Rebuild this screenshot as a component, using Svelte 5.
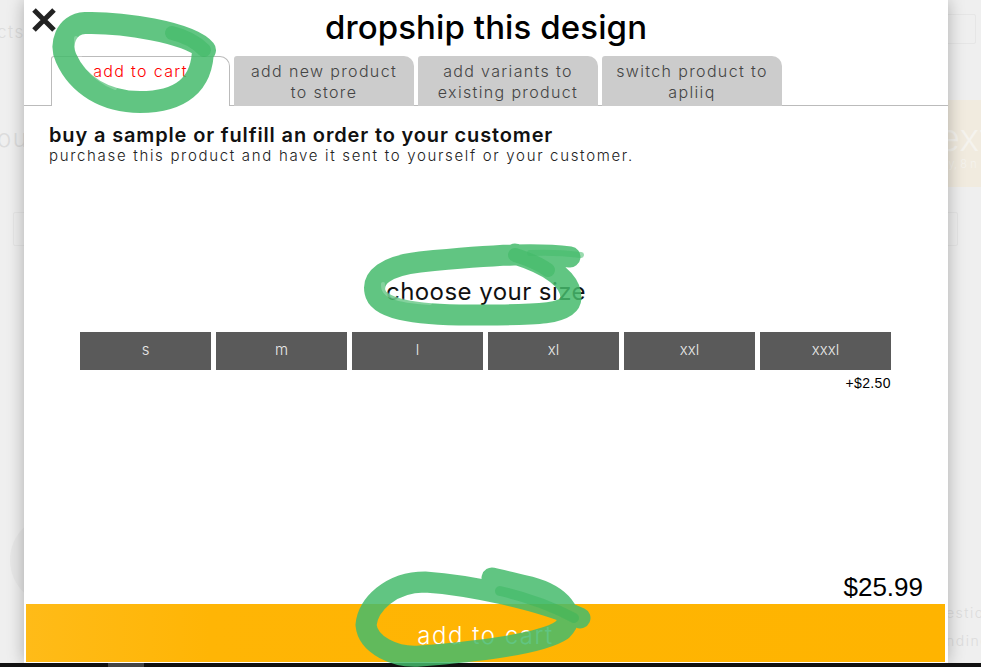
<script lang="ts">
  const tabs = [
    { label: "add to cart", active: true },
    { label: "add new product to store", active: false },
    { label: "add variants to existing product", active: false },
    { label: "switch product to apliiq", active: false },
  ];
  const sizes = ["s", "m", "l", "xl", "xxl", "xxxl"];
</script>

<div class="page">
  <!-- dimmed shop page behind the modal -->
  <div class="behind">
    <span class="ghost cts">cts</span>
    <span class="ghost you">ou</span>
    <span class="ghost-box search"></span>
    <span class="ghost-box left-box"></span>
    <span class="ghost-box right-box"></span>
    <div class="promo"><span class="ex">ext</span><span class="uy">uy, 8 n</span></div>
    <span class="ghost-circle"></span>
    <span class="ghost est">estio</span>
    <span class="ghost nd">nding</span>
  </div>

  <div class="modal">
    <button class="close" aria-label="close">
      <svg width="28" height="28" viewBox="0 0 28 28">
        <path d="M4 4 L24 24 M24 4 L4 24" stroke="#222" stroke-width="5" />
      </svg>
    </button>
    <h1>dropship this design</h1>

    <div class="tabs">
      {#each tabs as tab}
        <div class="tab" class:active={tab.active}>{tab.label}</div>
      {/each}
    </div>

    <div class="intro">
      <h2>buy a sample or fulfill an order to your customer</h2>
      <p>purchase this product and have it sent to yourself or your customer.</p>
    </div>

    <h3>choose your size</h3>
    <div class="sizes">
      {#each sizes as size}
        <div class="size">{size}</div>
      {/each}
    </div>
    <div class="upcharge">+$2.50</div>

    <div class="price">$25.99</div>
    <button class="cart">add to cart</button>
  </div>

  <div class="footer"><span class="thumb"></span></div>

  <!-- hand drawn highlighter marks -->
  <svg class="marks" width="981" height="667" viewBox="0 0 981 667">
    <g class="ink" fill="none" stroke-linejoin="round" stroke-linecap="round">
      <g stroke="#45bb6c" stroke-opacity="0.85">
        <path stroke-width="22" d="M205 50 C190 32 120 22 85 23 C65 24 60 45 66 58 C78 85 105 102 140 102 C180 102 203 85 203 48" />
        <path stroke-width="21" d="M570 257 C540 253 500 254 420 262 C385 266 372 278 375 292 C378 308 410 315 470 315 C530 315 570 316 571 298 C571 280 550 265 515 254" />
        <path stroke-width="21" d="M580 618 C540 600 470 585 425 582 C390 582 368 605 366 625 C368 645 395 658 420 656 C470 652 540 645 562 630 C578 615 560 595 530 587 C515 583 505 581 492 578" />
      </g>
      <!-- strokes overlapping where the pen closed the loop -->
      <g stroke="#2fb557" stroke-opacity="0.4">
        <path stroke-width="14" d="M172 33 C185 36 196 42 204 50" />
        <path stroke-width="14" d="M515 255 C525 258 538 263 548 270" />
        <path stroke-width="10" d="M500 591 C530 598 555 608 574 618" />
      </g>
      <path stroke="#45bb6c" stroke-opacity="0.55" stroke-width="6" d="M530 253 C550 252 565 253 581 255" />
      <!-- lighter inner edge of the pen stroke -->
      <g stroke="#fff" stroke-opacity="0.22" stroke-width="4">
        <path d="M76 38 C74 55 90 78 115 88" />
        <path d="M383 284 C382 296 395 301 430 303" />
      </g>
    </g>
  </svg>
</div>

<style>
  :global(body) {
    margin: 0;
    background: #efefef;
  }
  .page {
    position: relative;
    width: 981px;
    height: 667px;
    overflow: hidden;
    background: #efefef;
    font-family: Inter, "Liberation Sans", Arial, sans-serif;
    font-weight: 300;
    color: #000;
  }

  .behind {
    position: absolute;
    inset: 0;
    color: #ddd;
  }
  .ghost { position: absolute; font-size: 17px; letter-spacing: 1.5px; color: #dcdcdc; }
  .cts { left: -3px; top: 22px; }
  .you { left: -3px; top: 124px; font-size: 24px; }
  .est { left: 946px; top: 604px; font-size: 14px; }
  .nd { left: 946px; top: 632px; font-size: 14px; }
  .ghost-box { position: absolute; border: 1px solid #e6e6e6; border-radius: 2px; }
  .search { left: 940px; top: 14px; width: 34px; height: 28px; }
  .left-box { left: 13px; top: 212px; width: 30px; height: 32px; }
  .right-box { left: 940px; top: 212px; width: 16px; height: 32px; }
  .promo {
    position: absolute;
    left: 948px;
    top: 100px;
    width: 33px;
    height: 87px;
    background: #f1ebdf;
    color: #f5f3ee;
    overflow: hidden;
  }
  .ex { position: absolute; left: -10px; top: 18px; font-size: 38px; line-height: 38px; }
  .uy { position: absolute; left: -6px; top: 58px; font-size: 11px; line-height: 13px; white-space: nowrap; }
  .ghost-circle {
    position: absolute;
    left: 10px;
    top: 515px;
    width: 90px;
    height: 90px;
    border-radius: 50%;
    background: #e8e8e8;
  }

  .modal {
    position: absolute;
    left: 24px;
    top: 0;
    width: 924px;
    height: 663px;
    background: #fff;
    box-shadow: 0 0 16px rgba(0, 0, 0, 0.28);
    display: flex;
    flex-direction: column;
  }

  .close {
    position: absolute;
    left: 6px;
    top: 6px;
    padding: 0;
    border: 0;
    background: none;
    line-height: 0;
  }

  h1 {
    margin: 0;
    height: 56px;
    line-height: 54px;
    text-align: center;
    font-size: 33px;
    font-weight: 500;
    letter-spacing: 0.1px;
  }

  .tabs {
    display: flex;
    gap: 4px;
    height: 50px;
    box-sizing: border-box;
    padding-left: 27px;
    border-bottom: 1px solid #bbb;
  }
  .tab {
    width: 180px;
    height: 50px;
    box-sizing: border-box;
    padding: 5px 13px 0;
    background: #ccc;
    border-radius: 3px 10px 0 0;
    text-align: center;
    font-size: 16px;
    line-height: 21px;
    letter-spacing: 1.35px;
    color: #444;
  }
  .tab.active {
    width: 179px;
    padding-top: 4px;
    background: #fff;
    border: 1px solid #bbb;
    border-bottom: 0;
    color: #f00;
  }

  .intro {
    padding: 18px 0 0 25px;
  }
  h2 {
    margin: 0;
    font-size: 20px;
    line-height: 22px;
    font-weight: 600;
    letter-spacing: 0.85px;
    color: #111;
  }
  .intro p {
    margin: 0;
    font-size: 15px;
    line-height: 20px;
    letter-spacing: 1.68px;
    color: #222;
  }

  h3 {
    margin: 112px 0 0;
    text-align: center;
    font-size: 24px;
    line-height: 28px;
    font-weight: 400;
    letter-spacing: 0.45px;
    color: #111;
  }

  .sizes {
    display: flex;
    gap: 5px;
    margin: 26px 0 0 56px;
  }
  .size {
    width: 131px;
    height: 38px;
    background: #5a5a5a;
    color: #e8e8e8;
    font-size: 15px;
    line-height: 36px;
    text-align: center;
  }
  .upcharge {
    margin: 5px 57px 0 0;
    text-align: right;
    font-family: "Liberation Sans", Arial, sans-serif;
    font-size: 14px;
    line-height: 16px;
    letter-spacing: 0.4px;
  }

  .price {
    margin: auto 25px 2px 0;
    text-align: right;
    font-family: "Liberation Sans", Arial, sans-serif;
    font-size: 26px;
    line-height: 30px;
  }
  .cart {
    display: block;
    width: 919px;
    height: 58px;
    margin: 0 0 1px 2px;
    padding: 4px 0 0;
    border: 0;
    background: linear-gradient(90deg, #ffbb18 0%, #ffb505 20%, #ffb400 100%);
    color: #fff;
    font-family: inherit;
    font-weight: 300;
    font-size: 24px;
    letter-spacing: 1.5px;
  }

  .footer {
    position: absolute;
    left: 0;
    right: 0;
    top: 663px;
    height: 4px;
    background: #111;
  }
  .thumb {
    display: block;
    width: 36px;
    height: 4px;
    margin-left: 108px;
    background: #444;
  }

  .marks {
    position: absolute;
    left: 0;
    top: 0;
    pointer-events: none;
  }
  .ink {
    filter: blur(0.5px);
  }
</style>
